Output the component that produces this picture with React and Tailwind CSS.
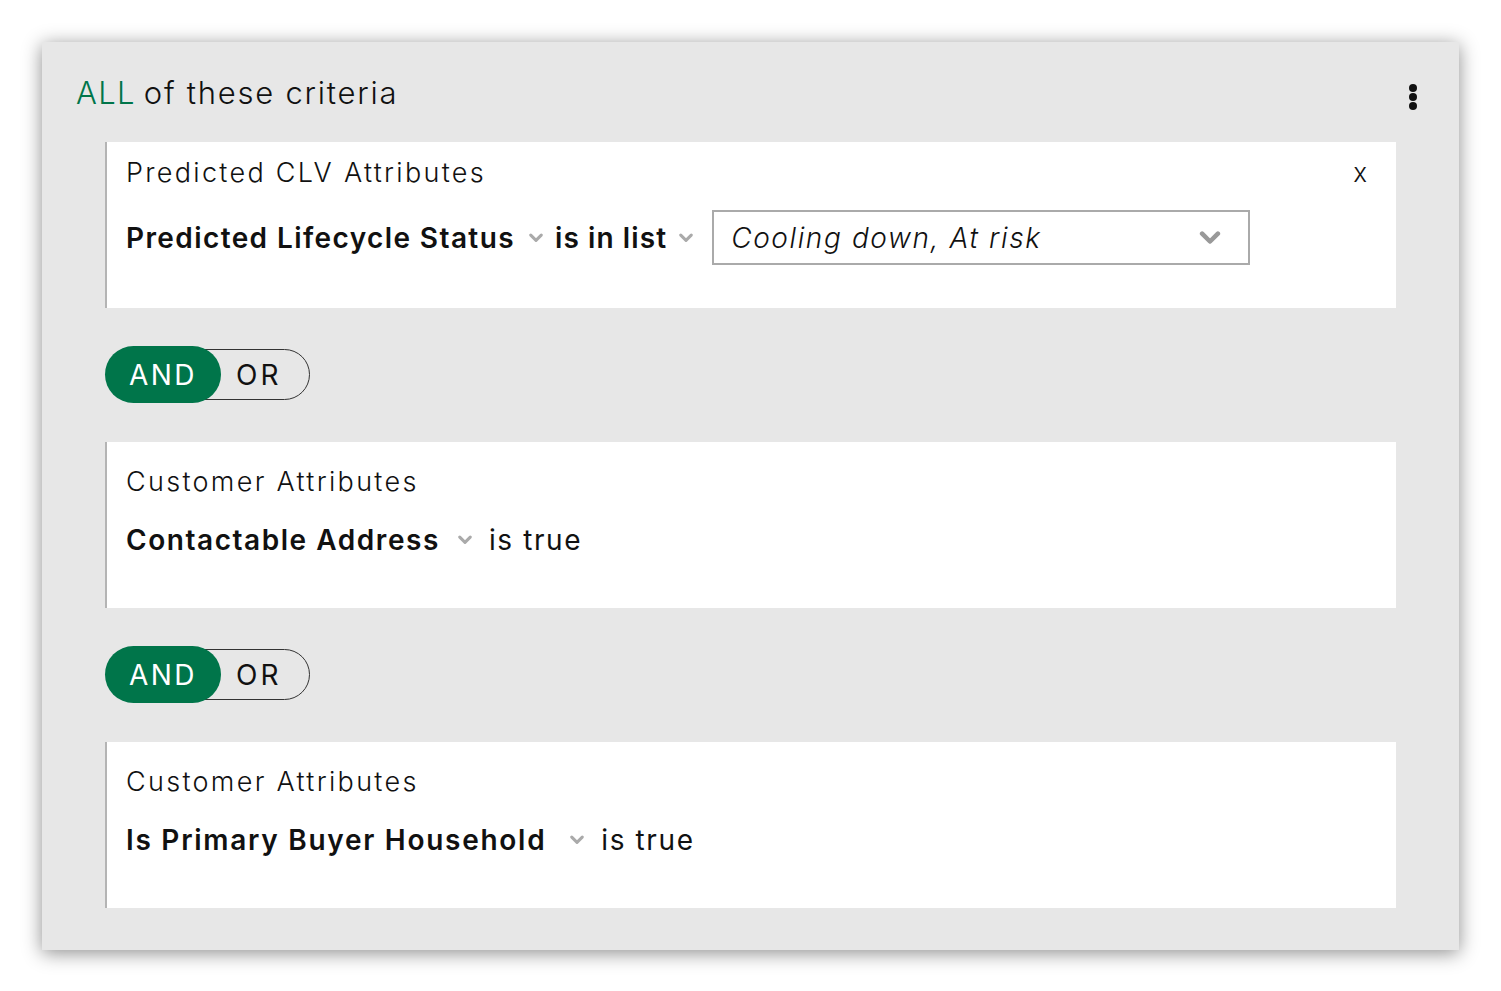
import React from "react";

const font = { fontFamily: "Inter, 'Open Sans', sans-serif" };

function Chevron({ className = "" }) {
  return (
    <svg viewBox="0 0 12 8" className={className} fill="none">
      <path d="M1.5 1.5 L6 6 L10.5 1.5" stroke="currentColor" strokeWidth="2.6" strokeLinecap="round" strokeLinejoin="round" />
    </svg>
  );
}

function Toggle() {
  return (
    <div className="relative flex items-center h-[57px] w-[205px]">
      <div className="absolute left-[60px] right-0 top-[3px] bottom-[3px] rounded-full border border-[#333]" />
      <div className="relative z-10 flex items-center justify-center h-[57px] w-[116px] rounded-full bg-[#00754a] text-white text-[28px] font-normal tracking-[2.5px]">
        AND
      </div>
      <div className="relative z-10 ml-[15px] text-[28px] text-[#111] tracking-[3px]">OR</div>
    </div>
  );
}

function Card({ title, children, pt, close }) {
  return (
    <div className={`relative h-[166px] bg-white border-l-2 border-[#b4b4b4] pl-[19px] ${pt}`}>
      <div className="text-[27px] leading-[36px] font-light text-[#111] tracking-[2.3px]">{title}</div>
      {close && (
        <div className="absolute right-[29px] top-[13px] text-[26px] font-light text-[#111] leading-[36px]">x</div>
      )}
      {children}
    </div>
  );
}

export default function App() {
  return (
    <div className="min-h-[991px] w-[1501px] bg-white pt-[42px] pl-[42px]" style={font}>
      <div className="w-[1417px] h-[908px] bg-[#e7e7e7] shadow-[0_3px_18px_rgba(0,0,0,0.45)] pt-[18px] pb-[42px] px-[63px] relative">
        <div className="flex items-center h-[66px] -ml-[29px]">
          <span className="text-[31px] font-light text-[#00754a] tracking-[1.3px]">ALL</span>
          <span className="text-[31px] font-light text-[#111] ml-[8px] tracking-[1.75px]">of these criteria</span>
        </div>
        <div className="absolute right-[42px] top-[42px] flex flex-col gap-[1px]">
          <span className="w-[8px] h-[8px] rounded-full bg-[#111]" />
          <span className="w-[8px] h-[8px] rounded-full bg-[#111]" />
          <span className="w-[8px] h-[8px] rounded-full bg-[#111]" />
        </div>
        <div className="mt-[16px] flex flex-col">
          <Card title="Predicted CLV Attributes" pt="pt-[13px]" close>
            <div className="flex items-center mt-[19px] h-[55px]">
              <span className="text-[28px] font-semibold text-[#111] tracking-[1.4px]">Predicted Lifecycle Status</span>
              <Chevron className="w-[14px] h-[10px] text-[#aaa] ml-[14px]" />
              <span className="text-[28px] font-semibold text-[#111] ml-[12px] tracking-[1.1px]">is in list</span>
              <Chevron className="w-[14px] h-[10px] text-[#aaa] ml-[12px]" />
              <div className="ml-[19px] w-[538px] h-[55px] border-2 border-[#aaa] flex items-center pl-[17px] pr-[27px]">
                <span className="text-[28px] italic font-light text-[#111] flex-1 tracking-[1.6px]">Cooling down, At risk</span>
                <Chevron className="w-[22px] h-[14px] text-[#999]" />
              </div>
            </div>
          </Card>
          <div className="mt-[38px] mb-[39px]"><Toggle /></div>
          <Card title="Customer Attributes" pt="pt-[22px]">
            <div className="flex items-center mt-[22px] h-[36px]">
              <span className="text-[28px] font-semibold text-[#111] tracking-[1.55px]">Contactable Address</span>
              <Chevron className="w-[14px] h-[10px] text-[#aaa] ml-[18px]" />
              <span className="text-[28px] font-normal text-[#111] ml-[17px] tracking-[1.6px]">is true</span>
            </div>
          </Card>
          <div className="mt-[38px] mb-[39px]"><Toggle /></div>
          <Card title="Customer Attributes" pt="pt-[22px]">
            <div className="flex items-center mt-[22px] h-[36px]">
              <span className="text-[28px] font-semibold text-[#111] tracking-[1.72px]">Is Primary Buyer Household</span>
              <Chevron className="w-[14px] h-[10px] text-[#aaa] ml-[24px]" />
              <span className="text-[28px] font-normal text-[#111] ml-[17px] tracking-[1.6px]">is true</span>
            </div>
          </Card>
        </div>
      </div>
    </div>
  );
}
